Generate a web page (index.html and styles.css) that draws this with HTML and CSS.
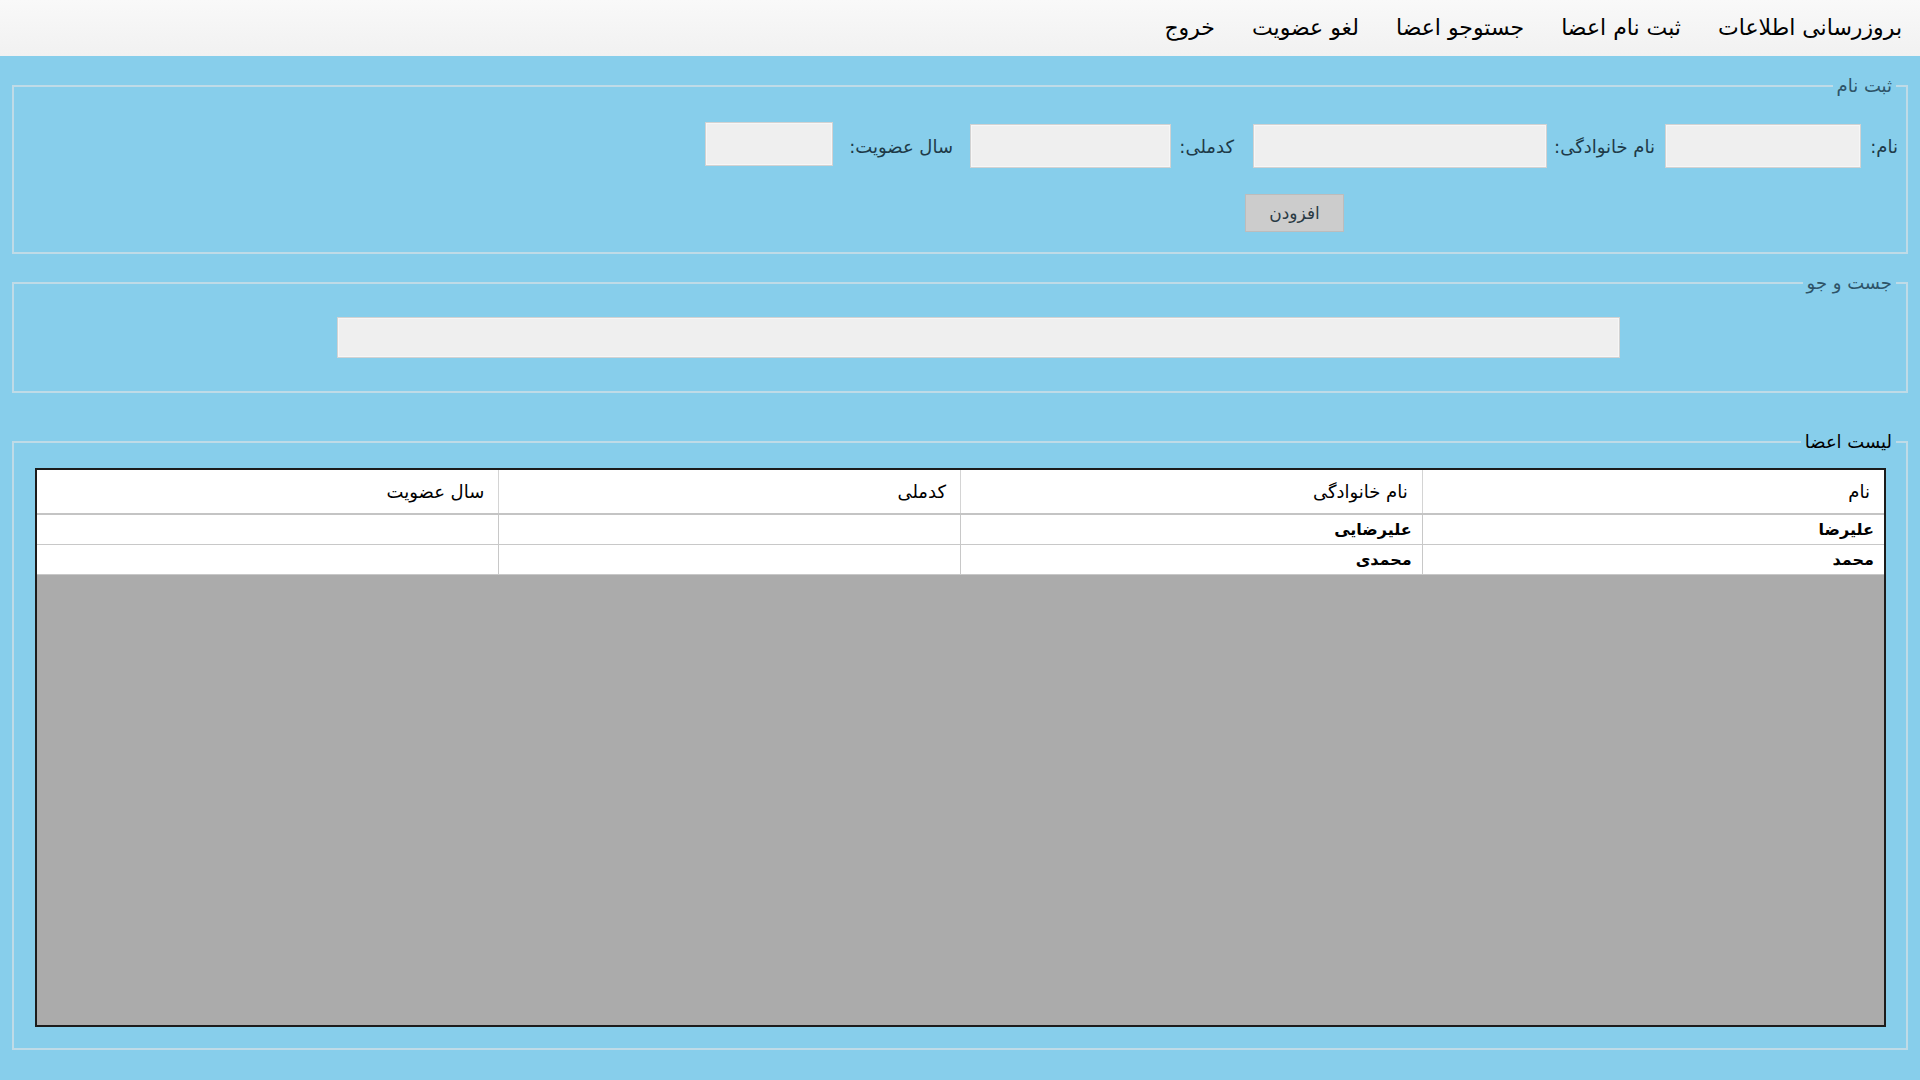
FILE: index.html
```html
<!DOCTYPE html>
<html lang="fa" dir="rtl">
<head>
    <meta charset="UTF-8">
    <meta name="viewport" content="width=device-width, initial-scale=1.0">
    <title>مدیریت اعضا</title>
    <link rel="stylesheet" href="styles.css">
</head>
<body>
    <nav class="menu-bar">
        <a href="#" class="menu-item">بروزرسانی اطلاعات</a>
        <a href="#" class="menu-item">ثبت نام اعضا</a>
        <a href="#" class="menu-item">جستوجو اعضا</a>
        <a href="#" class="menu-item">لغو عضویت</a>
        <a href="#" class="menu-item">خروج</a>
    </nav>

    <div class="main">
        <fieldset class="box box-register">
            <legend class="box-title">ثبت نام</legend>
            <div class="box-body">
                <div class="form-row">
                    <label for="first-name" class="form-label label-name">نام:</label>
                    <input type="text" id="first-name" class="input-field input-name">
                    <label for="last-name" class="form-label label-family">نام خانوادگی:</label>
                    <input type="text" id="last-name" class="input-field input-family">
                    <label for="national-code" class="form-label label-code">کدملی:</label>
                    <input type="text" id="national-code" class="input-field input-code">
                    <label for="join-year" class="form-label label-year">سال عضویت:</label>
                    <input type="text" id="join-year" class="input-field input-year">
                </div>
                <button type="button" class="add-button">افزودن</button>
            </div>
        </fieldset>

        <fieldset class="box box-search">
            <legend class="box-title">جست و جو</legend>
            <div class="box-body">
                <input type="text" class="input-field search-field">
            </div>
        </fieldset>

        <fieldset class="box box-list">
            <legend class="box-title box-title-dark">لیست اعضا</legend>
            <div class="box-body">
                <div class="grid">
                    <table class="members-table">
                        <thead>
                            <tr>
                                <th>نام</th>
                                <th>نام خانوادگی</th>
                                <th>کدملی</th>
                                <th>سال عضویت</th>
                            </tr>
                        </thead>
                        <tbody>
                            <tr>
                                <td>علیرضا</td>
                                <td>علیرضایی</td>
                                <td></td>
                                <td></td>
                            </tr>
                            <tr>
                                <td>محمد</td>
                                <td>محمدی</td>
                                <td></td>
                                <td></td>
                            </tr>
                        </tbody>
                    </table>
                </div>
            </div>
        </fieldset>
    </div>
</body>
</html>
```

FILE: styles.css
```css
body {
    margin: 0;
    background-color: #87ceeb;
    font-family: "DejaVu Sans", "Noto Sans", sans-serif;
    color: #000;
}
.menu-bar {
    height: 56px;
    display: flex;
    align-items: center;
    gap: 37px;
    padding-right: 18px;
    background: linear-gradient(to bottom, #f9f9f9, #f1f1f1);
}
.menu-item {
    color: #000;
    text-decoration: none;
    font-size: 22px;
    padding-bottom: 2px;
}
.main {
    padding: 20px 12px 0 12px;
}
.box {
    margin: 0;
    border: 2px solid #bfdbe7;
    padding: 0;
}
.box-title {
    padding: 0 4px;
    margin-right: 10px;
    height: 20px;
    line-height: 20px;
    font-size: 18px;
    color: #2e5468;
}
.box-title-dark {
    color: #000;
}
.box-register .box-body {
    padding: 28px 8px 20px 8px;
}
.box-search {
    margin-top: 19px;
}
.box-search .box-body {
    padding: 24px 0 33px 0;
}
.box-list {
    margin-top: 39px;
}
.box-list .box-body {
    padding: 16px 20px 21px 21px;
}
.form-row {
    display: flex;
    align-items: center;
}
.form-label {
    font-size: 18px;
    color: #1e3a48;
    white-space: nowrap;
}
.label-name { width: 37px; }
.label-family { width: 108px; margin-right: 10px; }
.label-code { width: 63px; margin-right: 19px; }
.label-year { width: 120px; margin-right: 17px; }
.input-field {
    box-sizing: border-box;
    height: 44px;
    border: 1px solid #d2d2d2;
    box-shadow: inset 0 0 0 1px #f6f6f6;
    background-color: #efefef;
    padding: 4px 8px;
    font-size: 16px;
    font-family: inherit;
    outline: none;
}
.input-name { width: 196px; }
.input-family { width: 294px; }
.input-code { width: 201px; }
.input-year { width: 128px; margin-top: -4px; }
.add-button {
    display: block;
    margin-top: 26px;
    margin-right: 554px;
    width: 99px;
    height: 38px;
    border: 1px solid #bcbcbc;
    background-color: #cccccc;
    color: #2a3a44;
    font-family: inherit;
    font-size: 17px;
    padding: 0;
}
.search-field {
    display: block;
    width: 1283px;
    height: 41px;
    margin-right: 286px;
}
.grid {
    height: 559px;
    box-sizing: border-box;
    border: 2px solid #1c1c1c;
    background-color: #ababab;
}
.members-table {
    width: 100%;
    border-collapse: collapse;
    table-layout: fixed;
    background-color: #fff;
}
.members-table th {
    height: 43px;
    text-align: right;
    font-weight: normal;
    font-size: 18px;
    padding: 0 14px;
    border-left: 1px solid #d4d4d4;
    border-bottom: 2px solid #c4c4c4;
}
.members-table td {
    height: 29px;
    text-align: right;
    font-size: 16px;
    font-weight: bold;
    padding: 0 10px;
    border-left: 1px solid #c8c8c8;
    border-bottom: 1px solid #c8c8c8;
}
.members-table th:last-child,
.members-table td:last-child {
    border-left: none;
}
```
